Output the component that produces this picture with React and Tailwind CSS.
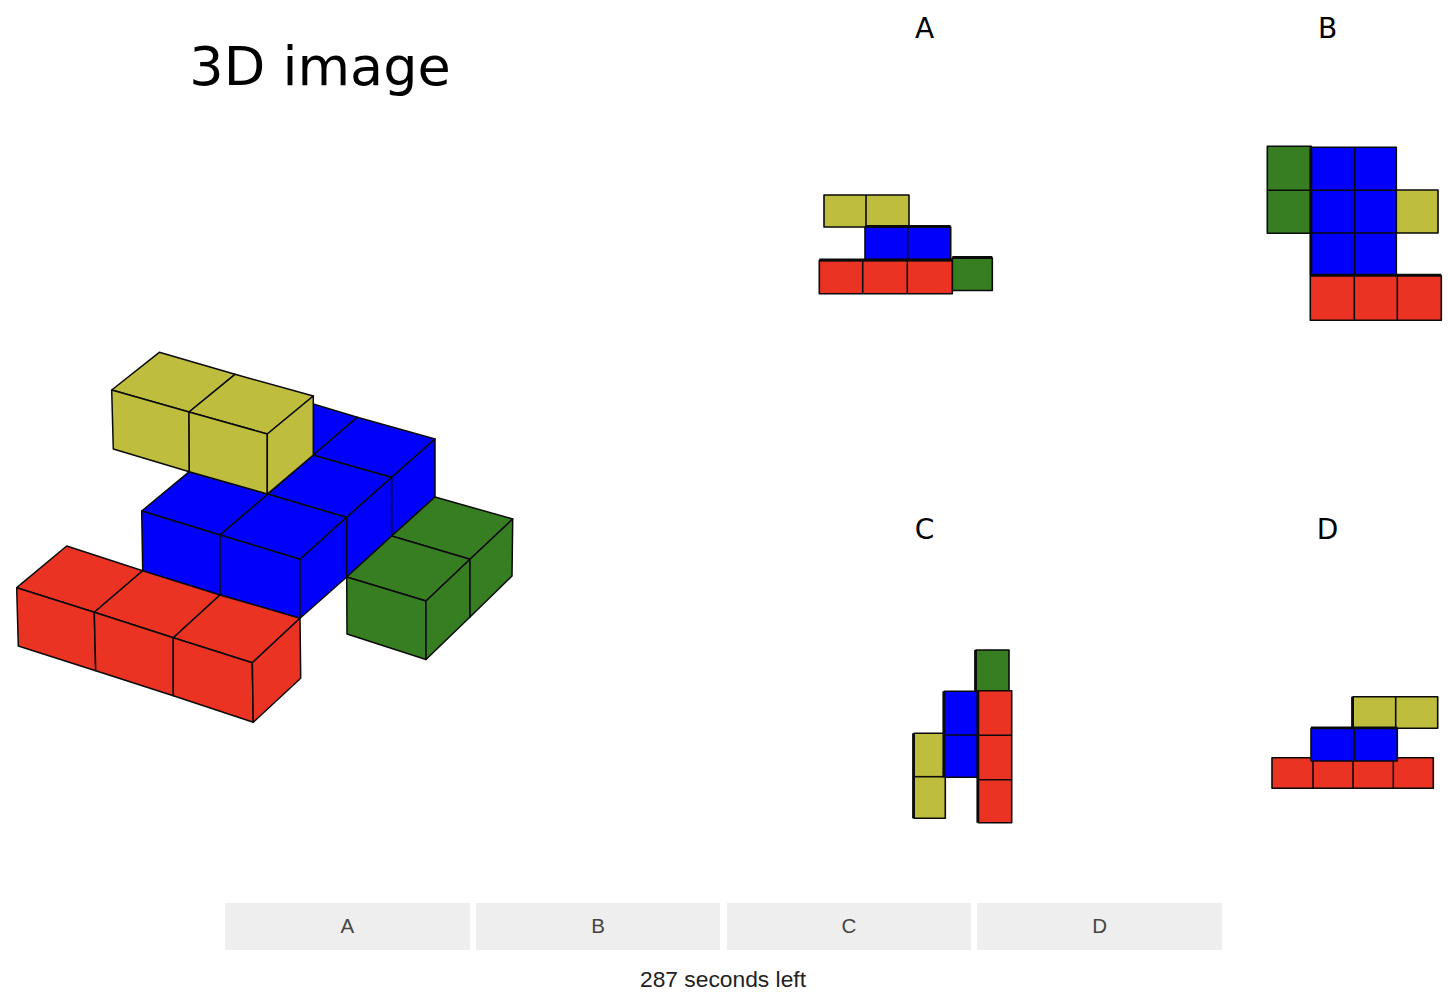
const yellow = '#bfbd3d';
const blue = '#0000fb';
const red = '#ea3323';
const green = '#377d22';

// faces of the 3D figure, back to front
const faces = [
  // blue
  [blue, '141.7,511 189.3,471.7 268,494 220,535'],
  [blue, '220,535 268,494 346.7,517.3 300,559.3'],
  [blue, '268,494 313.3,455 391.7,477.3 346.7,517.3'],
  [blue, '313.3,404 357.3,417.3 313.3,455'],
  [blue, '313.3,455 357.3,417.3 435,439 391.7,477.3'],
  [blue, '141.7,511 220,535 220,595 142.7,571'],
  [blue, '220,535 300,559.3 300,618.3 220,595'],
  [blue, '300,559.3 346.7,517.3 346.7,577 300,618.3'],
  [blue, '346.7,517.3 391.7,477.3 391.7,536 346.7,577'],
  [blue, '391.7,477.3 435,439 435,497 391.7,536'],
  // yellow
  [yellow, '111.7,390 159.3,352.3 235,374.3 189,412'],
  [yellow, '189,412 235,374.3 313.3,396 267.3,434'],
  [yellow, '111.7,390 189,412 189.3,471.7 113.3,449'],
  [yellow, '189,412 267.3,434 267.3,494 189.3,471.7'],
  [yellow, '267.3,434 313.3,396 313.3,455 267.3,494'],
  // green
  [green, '391.7,536 435,497 512.7,519 470,559.3'],
  [green, '346.7,577 391.7,536 470,559.3 426,601'],
  [green, '346.7,577 426,601 426,659.5 347,634'],
  [green, '426,601 470,559.3 470,617 426,659.5'],
  [green, '470,559.3 512.7,519 512,576 470,617'],
  // red
  [red, '16.7,587.7 66.7,546 142.7,570.7 94.3,612.3'],
  [red, '94.3,612.3 142.7,570.7 220,595 173.3,637.7'],
  [red, '173.3,637.7 220,595 300,618.3 252.3,662.7'],
  [red, '16.7,587.7 94.3,612.3 95.7,670.7 18.3,646'],
  [red, '94.3,612.3 173.3,637.7 173.3,695.7 95.7,670.7'],
  [red, '173.3,637.7 252.3,662.7 253.3,722.3 173.3,695.7'],
  [red, '252.3,662.7 300,618.3 300.7,678.3 253.3,722.3'],
];

// flat views: x, y, right, bottom, inner vertical and horizontal lines, heavier edges
const options = [
  {
    label: 'A',
    viewBox: '723 57 403 444',
    height: 'h-[444px]',
    blocks: [
      { fill: yellow, box: [824, 195, 909, 227], vs: [866], hs: [] },
      { fill: blue, box: [865, 227, 950.7, 259.5], vs: [907.7], hs: [], top: true },
      { fill: green, box: [952.3, 258, 992.3, 290.5], vs: [], hs: [], top: true },
      { fill: red, box: [819.3, 260.5, 952.3, 293.7], vs: [862.7, 907.3], hs: [], top: true },
    ],
  },
  {
    label: 'B',
    viewBox: '1126 57 403 444',
    height: 'h-[444px]',
    blocks: [
      { fill: green, box: [1267.3, 146.3, 1311.3, 233.3], vs: [], hs: [190.3] },
      { fill: blue, box: [1311.3, 147.3, 1396.3, 275.3], vs: [1354.7], hs: [190.3, 233], left: true },
      { fill: yellow, box: [1396.3, 190, 1438, 233], vs: [], hs: [] },
      { fill: red, box: [1310.3, 275.7, 1441.3, 320.3], vs: [1354.3, 1397.3], hs: [], top: true },
    ],
  },
  {
    label: 'C',
    viewBox: '723 558 403 345',
    height: 'h-[345px]',
    blocks: [
      { fill: yellow, box: [914, 733.3, 945.3, 818.3], vs: [], hs: [776.7], left: true },
      { fill: blue, box: [944.3, 691.3, 978.3, 777.3], vs: [], hs: [735], left: true },
      { fill: green, box: [976, 650, 1009, 690.7], vs: [], hs: [], left: true },
      { fill: red, box: [978.3, 690.7, 1011.7, 822.7], vs: [], hs: [735.3, 779.7], left: true },
    ],
  },
  {
    label: 'D',
    viewBox: '1126 558 403 345',
    height: 'h-[345px]',
    blocks: [
      { fill: red, box: [1272, 757.7, 1433.3, 788.3], vs: [1313, 1353, 1393.3], hs: [] },
      { fill: yellow, box: [1353, 696.7, 1437.7, 728.3], vs: [1395.7], hs: [], left: true },
      { fill: blue, box: [1311, 728.3, 1397.3, 761], vs: [1354.3], hs: [], top: true },
    ],
  },
];

function Block({ fill, box, vs, hs, top, left }) {
  const [x1, y1, x2, y2] = box;
  return (
    <g stroke="#0a0a0a" strokeLinejoin="round">
      <rect x={x1} y={y1} width={x2 - x1} height={y2 - y1} fill={fill} strokeWidth="1.6" />
      {vs.map((x) => <line key={x} x1={x} x2={x} y1={y1} y2={y2} strokeWidth="1.6" />)}
      {hs.map((y) => <line key={y} x1={x1} x2={x2} y1={y} y2={y} strokeWidth="1.6" />)}
      {top && <line x1={x1} x2={x2} y1={y1 - 0.5} y2={y1 - 0.5} strokeWidth="2.8" />}
      {left && <line x1={x1 - 0.5} x2={x1 - 0.5} y1={y1} y2={y2} strokeWidth="2.8" />}
    </g>
  );
}

export default function App() {
  return (
    <div className="w-full h-[1002px] overflow-hidden bg-white">
      <div className="flex h-[903px] font-['DejaVu_Sans',sans-serif] text-black">
        <div className="w-[723px] shrink-0">
          <div className="w-[640px] h-[340px] pt-[32px] text-center text-[54px] leading-[70px]">3D image</div>
          <svg className="block w-[530px] h-[400px] blur-[0.4px]" viewBox="0 340 530 400">
            {faces.map(([fill, points], i) => (
              <polygon key={i} points={points} fill={fill} stroke="#0a0a0a" strokeWidth="1.5" strokeLinejoin="round" />
            ))}
          </svg>
        </div>
        <div className="grid grid-cols-[403px_403px] grid-rows-[501px_402px] shrink-0">
          {options.map((opt) => (
            <div key={opt.label}>
              <div className="h-[57px] text-center text-[28px] leading-[57px]">{opt.label}</div>
              <svg className={`block w-[403px] blur-[0.4px] ${opt.height}`} viewBox={opt.viewBox}>
                {opt.blocks.map((b, i) => <Block key={i} {...b} />)}
              </svg>
            </div>
          ))}
        </div>
      </div>
      <div className="w-[997px] ml-[225px] grid grid-cols-4 gap-[6.3px] font-['Liberation_Sans',sans-serif]">
        {['A', 'B', 'C', 'D'].map((l) => (
          <button key={l} className="h-[46.5px] bg-[#eeeeee] text-[#444444] text-[20.5px]">{l}</button>
        ))}
      </div>
      <p className="mt-[15.5px] pr-[2px] text-center text-[22.8px] leading-[28px] text-[#222222] font-['Liberation_Sans',sans-serif]">287 seconds left</p>
    </div>
  );
}
